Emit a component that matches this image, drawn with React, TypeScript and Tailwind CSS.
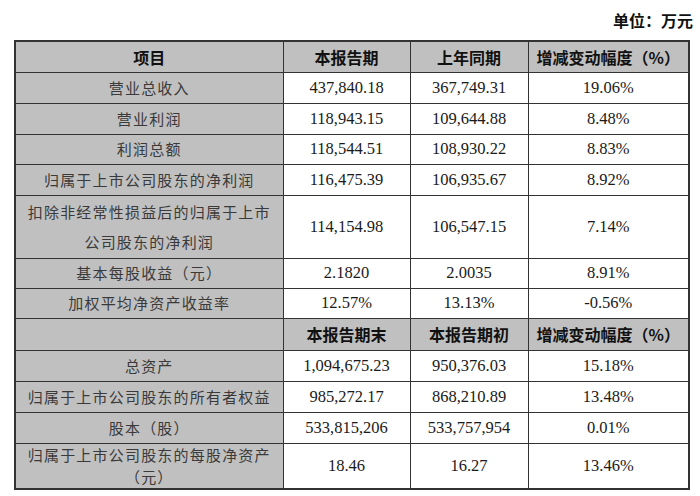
import React from "react";

type Row = { h: number; label: React.ReactNode; a: string; b: string; c: string; header?: boolean; lh?: number };

const rows: Row[] = [
  { h: 31, label: "项目", a: "本报告期", b: "上年同期", c: "增减变动幅度（%）", header: true },
  { h: 31, label: "营业总收入", a: "437,840.18", b: "367,749.31", c: "19.06%" },
  { h: 31, label: "营业利润", a: "118,943.15", b: "109,644.88", c: "8.48%" },
  { h: 30, label: "利润总额", a: "118,544.51", b: "108,930.22", c: "8.83%" },
  { h: 31, label: "归属于上市公司股东的净利润", a: "116,475.39", b: "106,935.67", c: "8.92%" },
  { h: 63, label: <>扣除非经常性损益后的归属于上市<br />公司股东的净利润</>, a: "114,154.98", b: "106,547.15", c: "7.14%", lh: 30 },
  { h: 30, label: "基本每股收益（元）", a: "2.1820", b: "2.0035", c: "8.91%" },
  { h: 30, label: "加权平均净资产收益率", a: "12.57%", b: "13.13%", c: "-0.56%" },
  { h: 32, label: "", a: "本报告期末", b: "本报告期初", c: "增减变动幅度（%）", header: true },
  { h: 31, label: "总资产", a: "1,094,675.23", b: "950,376.03", c: "15.18%" },
  { h: 31, label: "归属于上市公司股东的所有者权益", a: "985,272.17", b: "868,210.89", c: "13.48%" },
  { h: 31, label: "股本（股）", a: "533,815,206", b: "533,757,954", c: "0.01%" },
  { h: 46, label: <>归属于上市公司股东的每股净资产<br />（元）</>, a: "18.46", b: "16.27", c: "13.46%", lh: 22 },
];

const cjk = { fontFamily: '"Noto Sans CJK SC", sans-serif' };
const num = { fontFamily: '"Liberation Serif", "Noto Sans CJK SC", serif' };

export default function App() {
  return (
    <div className="w-[700px] h-[496px] bg-white relative overflow-hidden">
      <div className="h-[40px] flex items-start justify-end pr-[7px] pt-[9px]">
        <span className="text-[16px] font-bold text-[#111] leading-[22px]" style={cjk}>单位：万元</span>
      </div>
      <table className="ml-[14px] border-collapse table-fixed w-[674px] border-2 border-[#333]">
        <colgroup>
          <col className="w-[268px]" />
          <col className="w-[127px]" />
          <col className="w-[118px]" />
          <col className="w-[161px]" />
        </colgroup>
        <tbody>
          {rows.map((r, i) => (
            <tr key={i} style={{ height: r.h }} className={r.header ? "bg-[#c0c0c0]" : ""}>
              <td
                className={
                  "bg-[#c0c0c0] border border-[#333] text-center p-0 " +
                  (r.header ? "font-bold text-[16px] text-[#111]" : "text-[15px] text-[#3a3a3a] tracking-[1.2px]")
                }
                style={{ ...cjk, lineHeight: (r.lh ?? 22) + "px" }}
              >
                {r.label}
              </td>
              {[r.a, r.b, r.c].map((v, j) => (
                <td
                  key={j}
                  className={
                    "border border-[#333] text-center p-0 " +
                    (r.header ? "font-bold text-[16px] text-[#111] leading-[22px]" : "text-[16.5px] text-[#1a1a1a] leading-[22px]")
                  }
                  style={r.header ? cjk : num}
                >
                  {v}
                </td>
              ))}
            </tr>
          ))}
        </tbody>
      </table>
    </div>
  );
}
